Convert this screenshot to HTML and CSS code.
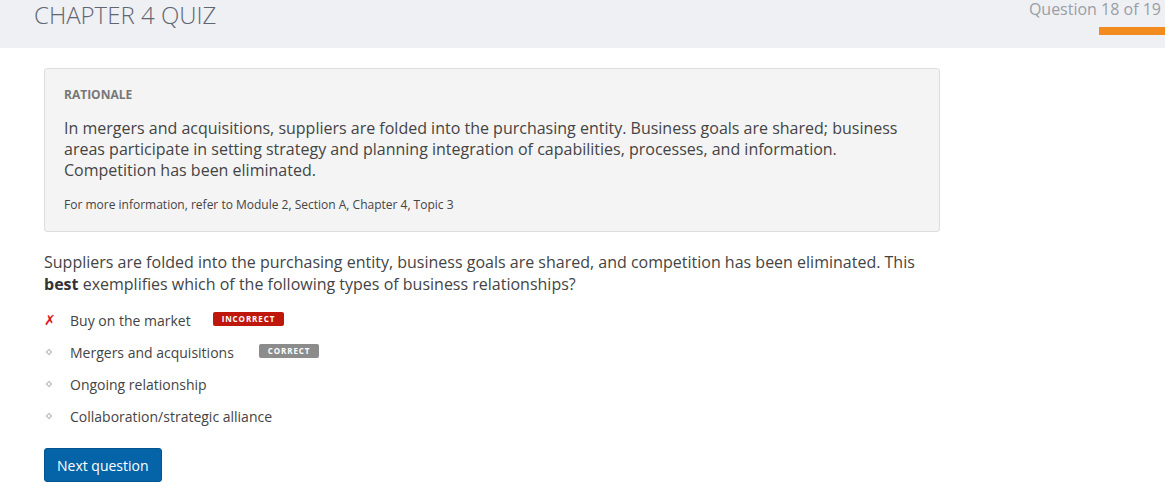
FILE: index.html
```html
<!DOCTYPE html>
<html>
<head>
<meta charset="utf-8">
<link rel="stylesheet" href="styles.css">
</head>
<body>
<header class="header">
  <h1 class="title">CHAPTER 4 QUIZ</h1>
  <div class="progress">
    <div class="progress-label">Question 18 of 19</div>
    <div class="progress-bar"></div>
  </div>
</header>
<main class="main">
  <section class="rationale">
    <div class="rationale-head">RATIONALE</div>
    <p class="rationale-text">In mergers and acquisitions, suppliers are folded into the purchasing entity. Business goals are shared; business areas participate in setting strategy and planning integration of capabilities, processes, and information. Competition has been eliminated.</p>
    <p class="rationale-ref">For more information, refer to Module 2, Section A, Chapter 4, Topic 3</p>
  </section>
  <p class="question">Suppliers are folded into the purchasing entity, business goals are shared, and competition has been eliminated. This <b>best</b> exemplifies which of the following types of business relationships?</p>
  <ul class="options">
    <li class="option"><span class="mark mark-x">&#x2717;</span><span class="opt-text">Buy on the market</span><span class="badge badge-incorrect">INCORRECT</span></li>
    <li class="option"><span class="mark"><svg width="8" height="8" viewBox="0 0 8 8"><path d="M4 0.5 L7.5 4 L4 7.5 L0.5 4 Z M4 2.5 L2.5 4 L4 5.5 L5.5 4 Z" fill="#c4c4c4" fill-rule="evenodd"/></svg></span><span class="opt-text">Mergers and acquisitions</span><span class="badge badge-correct">CORRECT</span></li>
    <li class="option"><span class="mark"><svg width="8" height="8" viewBox="0 0 8 8"><path d="M4 0.5 L7.5 4 L4 7.5 L0.5 4 Z M4 2.5 L2.5 4 L4 5.5 L5.5 4 Z" fill="#c4c4c4" fill-rule="evenodd"/></svg></span><span class="opt-text">Ongoing relationship</span></li>
    <li class="option"><span class="mark"><svg width="8" height="8" viewBox="0 0 8 8"><path d="M4 0.5 L7.5 4 L4 7.5 L0.5 4 Z M4 2.5 L2.5 4 L4 5.5 L5.5 4 Z" fill="#c4c4c4" fill-rule="evenodd"/></svg></span><span class="opt-text">Collaboration/strategic alliance</span></li>
  </ul>
  <button class="next-btn">Next question</button>
</main>
</body>
</html>
```
FILE: styles.css
```css
* { box-sizing: border-box; }
html, body { margin: 0; padding: 0; background: #fff; }
body { font-family: "Open Sans", "Liberation Sans", sans-serif; color: #444; }

.header {
  height: 48px;
  background: #eff0f4;
  display: flex;
  justify-content: space-between;
  align-items: flex-start;
  padding: 0 0 0 34px;
}
.title {
  margin: 0;
  font-weight: 300;
  font-size: 24px;
  line-height: 30px;
  color: #5f6773;
  letter-spacing: 0;
}
.progress {
  display: flex;
  flex-direction: column;
  align-items: flex-end;
}
.progress-label {
  font-size: 16px;
  line-height: 18px;
  color: #9a9ea6;
  padding-right: 4px;
}
.progress-bar {
  width: 66px;
  height: 8px;
  margin-top: 9px;
  background: #f28c1e;
}

.main {
  padding: 20px 0 0 44px;
  width: 940px;
}
.rationale {
  background: #f4f4f4;
  border: 1px solid #dedede;
  border-radius: 3px;
  padding: 19px 20px 17px 19px;
  height: 164px;
}
.rationale-head {
  font-size: 12px;
  font-weight: 700;
  color: #777;
  line-height: 14px;
}
.rationale-text {
  margin: 16px 0 0;
  font-size: 16px;
  line-height: 21px;
  color: #444;
}
.rationale-ref {
  margin: 16px 0 0;
  font-size: 12px;
  line-height: 16px;
  color: #444;
}
.question {
  margin: 19px 0 0;
  font-size: 16px;
  line-height: 22px;
  color: #444;
  width: 890px;
}
.question b { font-weight: 700; color: #333; }

.options {
  list-style: none;
  margin: 9px 0 0;
  padding: 0;
}
.option {
  display: flex;
  align-items: center;
  height: 32px;
  font-size: 14px;
  color: #444;
}
.mark {
  width: 26px;
  display: flex;
  align-items: center;
  padding-left: 1px;
}
.mark-x {
  color: #e0161c;
  font-size: 14px;
  font-weight: 700;
  font-style: italic;
  font-family: "DejaVu Sans", sans-serif;
  padding-left: 0;
}
.badge {
  display: inline-block;
  font-size: 8px;
  font-weight: 700;
  color: #fff;
  letter-spacing: 0.9px;
  line-height: 14px;
  height: 14px;
  padding: 0 9px;
  border-radius: 2px;
  margin-top: -2px;
}
.badge-incorrect { background: #c0170d; margin-left: 22px; }
.badge-correct { background: #8c8c8c; margin-left: 25px; }

.next-btn {
  margin-top: 16px;
  background: #0563a8;
  color: #fff;
  border: 1px solid #04558f;
  border-radius: 3px;
  font-family: "Open Sans", "Liberation Sans", sans-serif;
  font-size: 14px;
  height: 34px;
  padding: 0 12px;
  cursor: pointer;
}
```
